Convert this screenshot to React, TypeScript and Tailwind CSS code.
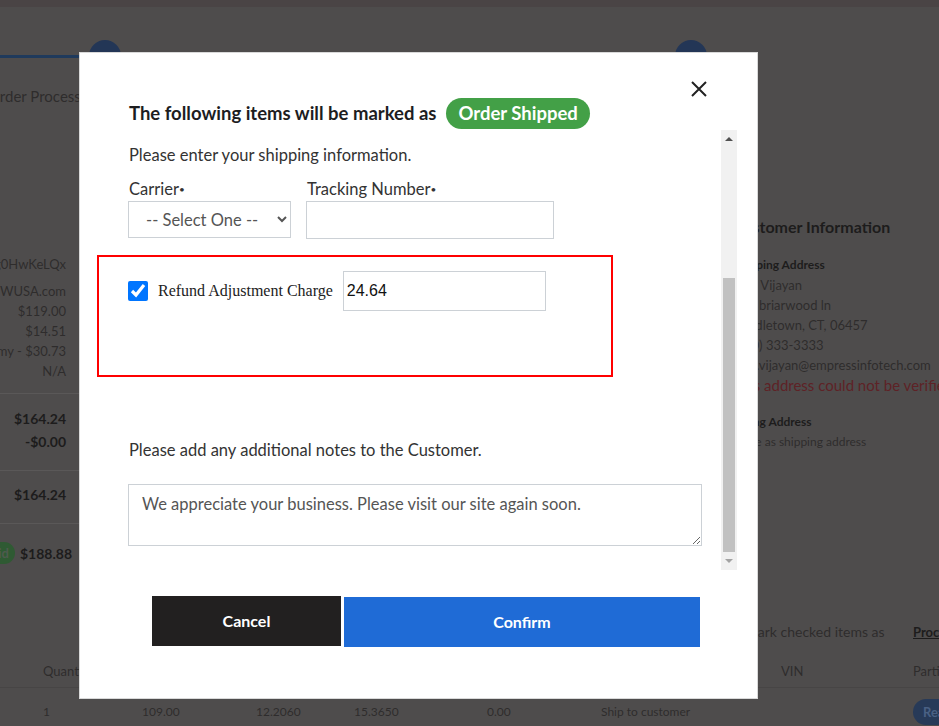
import { FC } from "react";

const font = "font-['Lato',_'Open_Sans',_sans-serif]";

const leftRows = [
  { text: "Ax3Fg0HwKeLQx", mt: "mt-[148px]" },
  { text: "sales@MWUSA.com", mt: "mt-[7px]" },
  { text: "$119.00", mt: "" },
  { text: "$14.51", mt: "" },
  { text: "UPS Economy - $30.73", mt: "" },
  { text: "N/A", mt: "" },
];

const customerRows = [
  "Sara Vijayan",
  "123 briarwood ln",
  "Middletown, CT, 06457",
  "(860) 333-3333",
  "sara.vijayan@empressinfotech.com",
];

const Background: FC = () => {
  return (
    <div className={`flex flex-col w-[939px] h-[726px] bg-[#4e4c4c] text-[#2e2c2c] ${font}`}>
      <div className="h-[7px] bg-[#4a4445] shrink-0" />
      {/* stepper */}
      <div className="flex items-center mt-[33px] h-[32px]">
        <div className="w-[89px] h-[3px] bg-[#1f3a5c]" />
        <div className="w-[32px] h-[32px] rounded-full bg-[#233656]" />
        <div className="ml-[554px] w-[32px] h-[32px] rounded-full bg-[#233656]" />
      </div>
      <div className="mt-[14px] h-[20px] leading-[20px] text-[15px] -ml-[12px] whitespace-nowrap">
        Order Processing
      </div>

      {/* summary + customer columns */}
      <div className="flex h-[509px]">
        <div className="flex flex-col w-[90px] shrink-0">
          {leftRows.map((r) => (
            <div
              key={r.text}
              className={`flex justify-end w-[66px] h-[20px] leading-[20px] text-[13px] whitespace-nowrap ${r.mt}`}
            >
              {r.text}
            </div>
          ))}
          <div className="mt-[12px] h-px bg-[#5a5858]" />
          <div className="flex justify-end w-[66px] mt-[15px] h-[20px] leading-[20px] text-[14px] font-bold text-[#1d1c1c]">
            $164.24
          </div>
          <div className="flex justify-end w-[66px] mt-[3px] h-[20px] leading-[20px] text-[14px] font-bold text-[#1d1c1c]">
            -$0.00
          </div>
          <div className="mt-[18px] h-px bg-[#5a5858]" />
          <div className="flex justify-end w-[66px] mt-[14px] h-[20px] leading-[20px] text-[14px] font-bold text-[#1d1c1c]">
            $164.24
          </div>
          <div className="mt-[18px] h-px bg-[#5a5858]" />
          <div className="flex items-center justify-end w-[72px] mt-[18px] h-[22px] gap-[5px] whitespace-nowrap">
            <span className="h-[22px] leading-[22px] pl-[8px] pr-[6px] rounded-full bg-[#2f5a33] text-[#4e5a4e] text-[13px] font-bold">
              Paid
            </span>
            <span className="text-[14px] font-bold text-[#1d1c1c]">$188.88</span>
          </div>
        </div>

        <div className="flex flex-col ml-[643px] pt-[109px] whitespace-nowrap">
          <div className="h-[24px] leading-[24px] text-[16px] font-bold text-[#1d1c1c]">
            Customer Information
          </div>
          <div className="mt-[16px] h-[20px] leading-[20px] text-[12px] font-bold text-[#1d1c1c]">
            Shipping Address
          </div>
          {customerRows.map((t) => (
            <div key={t} className="h-[20px] leading-[20px] text-[13px]">
              {t}
            </div>
          ))}
          <div className="h-[20px] leading-[20px] text-[15px] text-[#5e2226]">
            This address could not be verified
          </div>
          <div className="mt-[17px] h-[20px] leading-[20px] text-[12px] font-bold text-[#1d1c1c]">
            Billing Address
          </div>
          <div className="h-[20px] leading-[20px] text-[12px]">Same as shipping address</div>
        </div>
      </div>

      {/* bulk action row */}
      <div className="flex items-center ml-[745px] mt-[6px] h-[20px] whitespace-nowrap">
        <span className="w-[168px] shrink-0 text-[14px]">Mark checked items as</span>
        <span className="shrink-0 mt-[4px] text-[13px] font-bold text-[#1d1c1c] underline">Process</span>
      </div>

      {/* table */}
      <div className="grid grid-cols-[43px_99px_114px_98px_133px_114px_180px_132px_26px] mt-[20px] h-[20px] leading-[20px] text-[13px] whitespace-nowrap">
        <span />
        <span>Quantity</span>
        <span />
        <span />
        <span />
        <span />
        <span />
        <span>VIN</span>
        <span>Particular</span>
      </div>
      <div className="mt-[6px] h-px bg-[#474545]" />
      <div className="grid grid-cols-[43px_99px_114px_98px_133px_114px_180px_132px_26px] items-center mt-[11px] h-[20px] leading-[20px] text-[12px] whitespace-nowrap">
        <span />
        <span>1</span>
        <span>109.00</span>
        <span>12.2060</span>
        <span>15.3650</span>
        <span>0.00</span>
        <span>Ship to customer</span>
        <span />
        <span className="h-[26px] leading-[26px] pl-[10px] w-[60px] rounded-full bg-[#273a58] text-[#4a6184] font-bold text-[13px]">
          Ready
        </span>
      </div>
    </div>
  );
};

const Scrollbar: FC = () => {
  return (
    <div className="flex flex-col w-[16px] h-[440px] bg-[#f1f1f1] shrink-0">
      <div className="flex items-center justify-center h-[17px]">
        <div className="w-0 h-0 border-l-[4px] border-r-[4px] border-b-[4px] border-l-transparent border-r-transparent border-b-[#505050]" />
      </div>
      <div className="flex-1" />
      <div className="mx-[2px] h-[274px] bg-[#c1c1c1]" />
      <div className="flex items-center justify-center h-[18px]">
        <div className="w-0 h-0 border-l-[4px] border-r-[4px] border-t-[4px] border-l-transparent border-r-transparent border-t-[#a3a3a3]" />
      </div>
    </div>
  );
};

const ShipModal: FC = () => {
  return (
    <div
      className={`absolute left-[79px] top-[52px] w-[679px] h-[647px] flex flex-col bg-white border border-[#d9d9d9] text-[#333] ${font}`}
    >
      <button className="absolute top-[28px] right-[50px] w-[16px] h-[16px]">
        <svg viewBox="0 0 16 16" width="16" height="16" fill="none" stroke="#222" strokeWidth="2">
          <path d="M1 1 L15 15 M15 1 L1 15" />
        </svg>
      </button>

      <div className="flex items-center gap-[10px] mt-[45px] h-[31px] pl-[49px]">
        <h2 className="text-[18.5px] font-bold text-[#1d1d1f]">The following items will be marked as</h2>
        <span className="h-[31px] leading-[31px] px-[12px] rounded-full bg-[#43a047] text-white text-[18.5px] font-bold">
          Order Shipped
        </span>
      </div>

      <div className="flex h-[440px] mt-px">
        <div className="flex flex-col w-[641px] pl-[17px] overflow-hidden">
          <p className="mt-[13px] h-[24px] leading-[24px] pl-[32px] text-[16.5px]">
            Please enter your shipping information.
          </p>
          <div className="flex mt-[11px] pl-[31px]">
            <div className="flex flex-col w-[163px]">
              <label className="h-[23px] leading-[23px] pl-px text-[16.5px]">
                Carrier<span className="text-[10px] align-top">•</span>
              </label>
              <select className="h-[37px] w-[163px] pl-[13px] border border-[#ccd1d6] text-[16.5px] text-[#555] bg-white">
                <option>-- Select One --</option>
              </select>
            </div>
            <div className="flex flex-col ml-[15px] w-[248px]">
              <label className="h-[23px] leading-[23px] pl-px text-[16.5px]">
                Tracking Number<span className="text-[10px] align-top">•</span>
              </label>
              <input className="h-[38px] w-[248px] border border-[#ccd1d6] px-[8px] text-[16px]" />
            </div>
          </div>

          <div className="mt-[16px] w-[516px] h-[122px] border-2 border-[#ff0000] pt-[14px] pl-[29px]">
            <div className="flex items-center">
              <input type="checkbox" defaultChecked className="w-[20px] h-[20px] m-0 accent-[#0075ff]" />
              <span className="ml-[10px] text-[16px] text-[#222] font-['Liberation_Serif',_serif]">
                Refund Adjustment Charge
              </span>
              <input
                defaultValue="24.64"
                className="ml-[10px] w-[203px] h-[40px] border border-[#ccd1d6] pl-[3px] text-[16px] text-[#111] font-['Liberation_Sans',_Arial,_sans-serif]"
              />
            </div>
          </div>

          <p className="mt-[61px] h-[24px] leading-[24px] pl-[32px] text-[16.5px]">
            Please add any additional notes to the Customer.
          </p>
          <textarea
            defaultValue="We appreciate your business. Please visit our site again soon."
            className="mt-[22px] ml-[31px] w-[574px] h-[62px] border border-[#ccd1d6] pl-[13px] pt-[7px] text-[16.5px] text-[#555]"
          />
        </div>
        <Scrollbar />
      </div>

      <div className="flex items-start mt-[26px] pl-[72px]">
        <button className="w-[189px] h-[50px] bg-[#222020] text-white text-[16px] font-bold">Cancel</button>
        <button className="ml-[3px] mt-px w-[356px] h-[50px] bg-[#1f6bd6] text-white text-[16px] font-bold">
          Confirm
        </button>
      </div>
    </div>
  );
};

const App: FC = () => {
  return (
    <div className="relative w-[939px] h-[726px] overflow-hidden">
      <Background />
      <ShipModal />
    </div>
  );
};

export default App;
